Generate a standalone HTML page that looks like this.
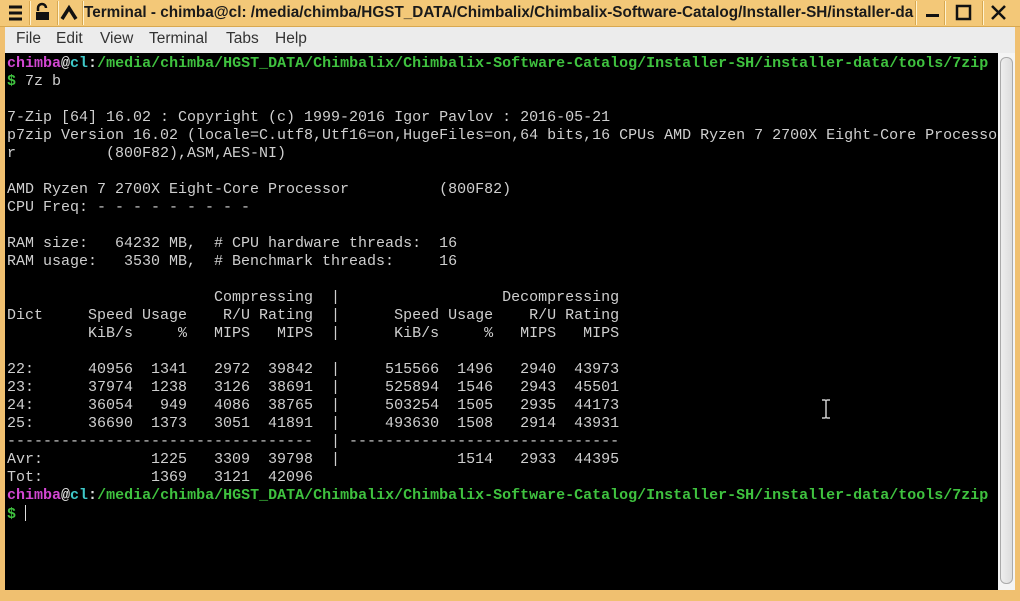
<!DOCTYPE html>
<html><head><style>
body{margin:0;width:1020px;height:601px;overflow:hidden;background:#f0c070;font-family:"Liberation Sans","DejaVu Sans",sans-serif;position:relative}
.title{position:absolute;left:0;top:0;width:1020px;height:26px;background:#f3c878;border-bottom:1px solid #d8a850}
.title .t{position:absolute;left:84px;top:4px;font-size:15.3px;font-weight:bold;color:#1a1a1a;white-space:nowrap;font-family:"Liberation Sans",sans-serif;width:830px;overflow:hidden}
.btn{position:absolute;top:1px;height:24px;border-left:1px solid #d8a850;border-right:1px solid #fff3d0}
.menu{position:absolute;left:5px;top:27px;width:1010px;height:26px;background:#ececec}
.menu span{position:absolute;top:3px;font-size:15.5px;color:#333;font-family:"Liberation Sans",sans-serif}
.term{position:absolute;left:5px;top:53px;width:993px;height:537px;background:#000;overflow:hidden}
pre{margin:0;position:absolute;left:2px;top:2px;font-family:"Liberation Mono",monospace;font-size:15px;line-height:18px;color:#cfcfcf}
.m{color:#d247d2;font-weight:bold}.c{color:#3ec8c8;font-weight:bold}.g{color:#3fc23f;font-weight:bold}.w{color:#e0e0e0;font-weight:bold}
.sb{position:absolute;left:998px;top:53px;width:17px;height:537px;background:#f4f4f4}
.sb div{position:absolute;left:2px;top:4px;width:11px;height:525px;border:1px solid #aaa;border-radius:6px;background:linear-gradient(90deg,#eee,#ddd)}
</style></head><body>
<div class="title">
<div class="btn" style="left:29px;width:0"></div>
<div class="btn" style="left:57px;width:0"></div>
<div class="btn" style="left:82px;width:0"></div>
<svg style="position:absolute;left:0;top:0" width="85" height="26">
<g stroke="#111" stroke-width="3"><line x1="9" y1="7" x2="22" y2="7"/><line x1="9" y1="13" x2="22" y2="13"/><line x1="9" y1="19" x2="22" y2="19"/></g>
<path d="M38 11 v-3 a4 4 0 0 1 8 0" fill="none" stroke="#111" stroke-width="2.5"/><rect x="36" y="12" width="13" height="8" fill="#111"/>
<path d="M62 19 L69 8 L76 19" fill="none" stroke="#111" stroke-width="3.5"/>
</svg>
<div class="t">Terminal - chimba@cl: /media/chimba/HGST_DATA/Chimbalix/Chimbalix-Software-Catalog/Installer-SH/installer-da</div>
<div class="btn" style="left:915px;width:0"></div>
<div class="btn" style="left:944px;width:0"></div>
<div class="btn" style="left:982px;width:0"></div>
<svg style="position:absolute;left:915px;top:0" width="105" height="26">
<rect x="11" y="14" width="13" height="3" fill="#111"/>
<rect x="42" y="6" width="13" height="13" fill="none" stroke="#111" stroke-width="2.5"/>
<path d="M77 6 L90 19 M90 6 L77 19" stroke="#111" stroke-width="2.5"/>
</svg>
</div>
<div class="menu">
<span style="left:11px">File</span><span style="left:51px">Edit</span><span style="left:95px">View</span><span style="left:144px">Terminal</span><span style="left:221px">Tabs</span><span style="left:270px">Help</span>
</div>
<div class="term"><pre><span class="m">chimba</span><span class="w">@</span><span class="c">cl</span><span class="w">:</span><span class="g">/media/chimba/HGST_DATA/Chimbalix/Chimbalix-Software-Catalog/Installer-SH/installer-data/tools/7zip</span>
<span class="g">$</span> 7z b

7-Zip [64] 16.02 : Copyright (c) 1999-2016 Igor Pavlov : 2016-05-21
p7zip Version 16.02 (locale=C.utf8,Utf16=on,HugeFiles=on,64 bits,16 CPUs AMD Ryzen 7 2700X Eight-Core Processo
r          (800F82),ASM,AES-NI)

AMD Ryzen 7 2700X Eight-Core Processor          (800F82)
CPU Freq: - - - - - - - - -

RAM size:   64232 MB,  # CPU hardware threads:  16
RAM usage:   3530 MB,  # Benchmark threads:     16

                       Compressing  |                  Decompressing
Dict     Speed Usage    R/U Rating  |      Speed Usage    R/U Rating
         KiB/s     %   MIPS   MIPS  |      KiB/s     %   MIPS   MIPS

22:      40956  1341   2972  39842  |     515566  1496   2940  43973
23:      37974  1238   3126  38691  |     525894  1546   2943  45501
24:      36054   949   4086  38765  |     503254  1505   2935  44173
25:      36690  1373   3051  41891  |     493630  1508   2914  43931
----------------------------------  | ------------------------------
Avr:            1225   3309  39798  |             1514   2933  44395
Tot:            1369   3121  42096
<span class="m">chimba</span><span class="w">@</span><span class="c">cl</span><span class="w">:</span><span class="g">/media/chimba/HGST_DATA/Chimbalix/Chimbalix-Software-Catalog/Installer-SH/installer-data/tools/7zip</span>
<span class="g">$</span> <span style="display:inline-block;width:1px;height:16px;background:#ddd;vertical-align:-3px"></span></pre>
<svg style="position:absolute;left:815px;top:345px" width="12" height="22"><path d="M2 2h3l1 1 1-1h3M6 3v16M2 20h3l1-1 1 1h3" stroke="#ccc" stroke-width="1.5" fill="none"/></svg>
</div>
<div class="sb"><div></div></div>
</body></html>
